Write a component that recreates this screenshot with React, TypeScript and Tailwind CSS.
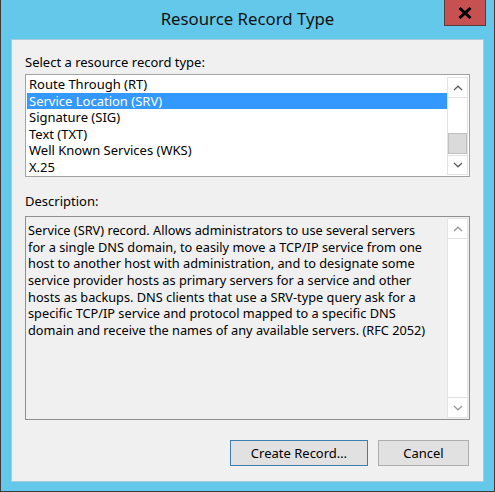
import React from "react";

const font = { fontFamily: '"Noto Sans", "Open Sans", Arial, sans-serif' };

function Chevron({ dir, color }: { dir: "up" | "down"; color: string }) {
  return (
    <svg width="10" height="6" viewBox="0 0 10 6">
      <polyline
        points={dir === "up" ? "1,5 5,1.2 9,5" : "1,1 5,4.8 9,1"}
        fill="none"
        stroke={color}
        strokeWidth="1.3"
      />
    </svg>
  );
}

function ListScrollbar() {
  return (
    <div className="flex w-[21px] flex-col border-x border-[#e3e3e3] bg-white">
      <div className="flex h-[21px] items-center justify-center border-y border-[#e3e3e3]">
        <Chevron dir="up" color="#606060" />
      </div>
      <div className="flex-1 flex flex-col">
        <div className="h-[35px]" />
        <div className="h-[21px] border border-[#bfbfbf] bg-[#dadada]" />
        <div className="flex-1" />
      </div>
      <div className="flex h-[20px] items-center justify-center border-y border-[#e3e3e3]">
        <Chevron dir="down" color="#606060" />
      </div>
    </div>
  );
}

function DescScrollbar() {
  return (
    <div className="flex w-[21px] flex-col border-x border-[#e3e3e3] bg-white">
      <div className="flex h-[21px] items-center justify-center border-y border-[#e3e3e3]">
        <Chevron dir="up" color="#9a9a9a" />
      </div>
      <div className="flex-1" />
      <div className="flex h-[21px] items-center justify-center border-y border-[#e3e3e3]">
        <Chevron dir="down" color="#9a9a9a" />
      </div>
    </div>
  );
}

const items = [
  "Route Through (RT)",
  "Service Location (SRV)",
  "Signature (SIG)",
  "Text (TXT)",
  "Well Known Services (WKS)",
  "X.25",
];

const desc = [
  "Service (SRV) record. Allows administrators to use several servers",
  "for a single DNS domain, to easily move a TCP/IP service from one",
  "host to another host with administration, and to designate some",
  "service provider hosts as primary servers for a service and other",
  "hosts as backups. DNS clients that use a SRV-type query ask for a",
  "specific TCP/IP service and protocol mapped to a specific DNS",
  "domain and receive the names of any available servers. (RFC 2052)",
];

export default function App() {
  return (
    <div
      className="flex h-[492px] w-[495px] flex-col border-x border-b border-[#3c3c3c] bg-[#63c8ea] text-black"
      style={font}
    >
      {/* Title bar */}
      <div className="grid h-[39px] grid-cols-[1fr_auto_1fr]">
        <div />
        <div className="pt-[9px] text-[16.8px] leading-[20px] text-[#111]">Resource Record Type</div>
        <div className="flex justify-end pr-[8px]">
          <div className="flex h-[26px] w-[42px] items-center justify-center border-x border-b border-[#5b3a3a] bg-[#c75050]">
            <svg width="14" height="12" viewBox="0 0 14 12">
              <path d="M1.5 1 L12.5 11 M12.5 1 L1.5 11" stroke="#000" strokeWidth="3" />
            </svg>
          </div>
        </div>
      </div>

      {/* Client area */}
      <div className="mx-[10px] mb-[9px] flex flex-1 flex-col border border-[#a9cad9] bg-[#f0f0f0] px-[13px] pt-[14px] pb-[14px] text-[13px]">
        <div className="h-[17px] leading-[17px]">Select a resource record type:</div>
        <div className="mt-[3px] flex h-[103px] border border-[#a3a3a3] bg-white p-[1px]">
          <div className="flex-1 overflow-hidden">
            {items.map((it, i) => (
              <div
                key={it}
                className={
                  "h-[16.5px] whitespace-nowrap pl-[2px] leading-[16.5px] " +
                  (i === 1 ? "bg-[#3399ff] text-white" : "")
                }
              >
                {it}
              </div>
            ))}
          </div>
          <div className="flex pt-[1px]">
            <ListScrollbar />
          </div>
        </div>

        <div className="mt-[16px] h-[17px] leading-[17px]">Description:</div>
        <div className="mt-[6px] flex h-[204px] border border-[#8f8f8f] bg-[#f0f0f0] p-[1px]">
          <div className="flex-1 whitespace-nowrap pl-[1px] pt-[4px] text-[12.75px] leading-[16.67px]">
            {desc.map((l) => (
              <div key={l}>{l}</div>
            ))}
          </div>
          <DescScrollbar />
        </div>

        <div className="mt-[20px] flex justify-end gap-[10px]">
          <button className="h-[26px] w-[138px] border border-[#3c7fb1] bg-[#e1e1e1] text-[13px] leading-[24px]">
            Create Record…
          </button>
          <button className="mr-[1px] h-[26px] w-[91px] border border-[#adadad] bg-[#e1e1e1] text-[13px] leading-[24px]">
            Cancel
          </button>
        </div>
      </div>
    </div>
  );
}
